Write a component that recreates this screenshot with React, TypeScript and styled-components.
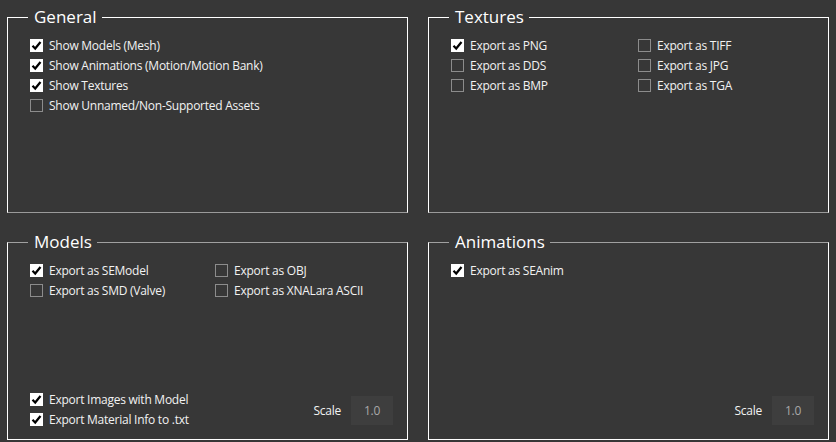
import React from "react";
import styled, { createGlobalStyle } from "styled-components";

const GlobalStyle = createGlobalStyle`
  html, body {
    margin: 0;
    padding: 0;
    background: #373737;
    width: 836px;
    height: 442px;
    overflow: hidden;
  }
  * { box-sizing: border-box; }
`;

const Page = styled.div`
  display: grid;
  grid-template-columns: 401px 401px;
  grid-template-rows: 208px 210px;
  column-gap: 20px;
  row-gap: 17px;
  padding: 5px 0 0 7px;
  font-family: "Open Sans", "Noto Sans", sans-serif;
  color: #f2f2f2;
`;

const Group = styled.fieldset<{ $top: string; $bottom: string }>`
  margin: 0;
  padding: 6px 14px 10px 22px;
  min-width: 0;
  border: 1px solid #ffffff;
  border-top-color: ${(p) => p.$top};
  border-bottom-color: ${(p) => p.$bottom};
  display: flex;
  flex-direction: column;
`;

const Title = styled.legend`
  margin-left: -2px;
  padding: 0 5px 0 6px;
  font-size: 17px;
  line-height: 24px;
  height: 24px;
  color: #ffffff;
`;

const Columns = styled.div<{ $col: number }>`
  display: grid;
  grid-template-columns: ${(p) => p.$col}px 1fr;
  grid-auto-flow: column;
  grid-template-rows: repeat(var(--rows), 20px);
`;

const Stack = styled.div`
  display: flex;
  flex-direction: column;
`;

const Row = styled.label`
  display: flex;
  align-items: center;
  height: 20px;
  gap: 6px;
  font-size: 12px;
  letter-spacing: -0.25px;
  white-space: nowrap;
`;

const Box = styled.span<{ $on: boolean }>`
  width: 13px;
  height: 13px;
  flex: none;
  display: flex;
  align-items: center;
  justify-content: center;
  background: ${(p) => (p.$on ? "#ffffff" : "#373737")};
  border: 1px solid ${(p) => (p.$on ? "#ffffff" : "#8c8c8c")};
`;

const Footer = styled.div`
  margin-top: auto;
  display: flex;
  align-items: flex-end;
  justify-content: space-between;
`;

const ScaleWrap = styled.div`
  display: flex;
  align-items: center;
  gap: 10px;
  margin-bottom: 4px;
  font-size: 12px;
  letter-spacing: -0.25px;
`;

const ScaleBox = styled.div`
  width: 42px;
  height: 29px;
  background: #3e3e3e;
  color: #a8a8a8;
  display: flex;
  align-items: center;
  justify-content: center;
  font-size: 12px;
`;

const Check = () => (
  <svg width="11" height="11" viewBox="0 0 11 11">
    <path d="M1.5 5.8 L4.2 8.5 L9.5 2" stroke="#000" strokeWidth="2.2" fill="none" />
  </svg>
);

const CB: React.FC<{ on?: boolean; label: string }> = ({ on = false, label }) => (
  <Row>
    <Box $on={on}>{on && <Check />}</Box>
    {label}
  </Row>
);

const Scale = () => (
  <ScaleWrap>
    Scale
    <ScaleBox>1.0</ScaleBox>
  </ScaleWrap>
);

export default function App() {
  return (
    <>
      <GlobalStyle />
      <Page>
        <Group $top="#ffffff" $bottom="#9a9a9a">
          <Title>General</Title>
          <Stack>
            <CB on label="Show Models (Mesh)" />
            <CB on label="Show Animations (Motion/Motion Bank)" />
            <CB on label="Show Textures" />
            <CB label="Show Unnamed/Non-Supported Assets" />
          </Stack>
        </Group>
        <Group $top="#ffffff" $bottom="#9a9a9a">
          <Title>Textures</Title>
          <Columns $col={187} style={{ ["--rows" as string]: 3 }}>
            <CB on label="Export as PNG" />
            <CB label="Export as DDS" />
            <CB label="Export as BMP" />
            <CB label="Export as TIFF" />
            <CB label="Export as JPG" />
            <CB label="Export as TGA" />
          </Columns>
        </Group>
        <Group $top="#a0a0a0" $bottom="#ffffff">
          <Title>Models</Title>
          <Columns $col={185} style={{ ["--rows" as string]: 2 }}>
            <CB on label="Export as SEModel" />
            <CB label="Export as SMD (Valve)" />
            <CB label="Export as OBJ" />
            <CB label="Export as XNALara ASCII" />
          </Columns>
          <Footer>
            <Stack>
              <CB on label="Export Images with Model" />
              <CB on label="Export Material Info to .txt" />
            </Stack>
            <Scale />
          </Footer>
        </Group>
        <Group $top="#a0a0a0" $bottom="#ffffff">
          <Title>Animations</Title>
          <Stack>
            <CB on label="Export as SEAnim" />
          </Stack>
          <Footer>
            <span />
            <Scale />
          </Footer>
        </Group>
      </Page>
    </>
  );
}
